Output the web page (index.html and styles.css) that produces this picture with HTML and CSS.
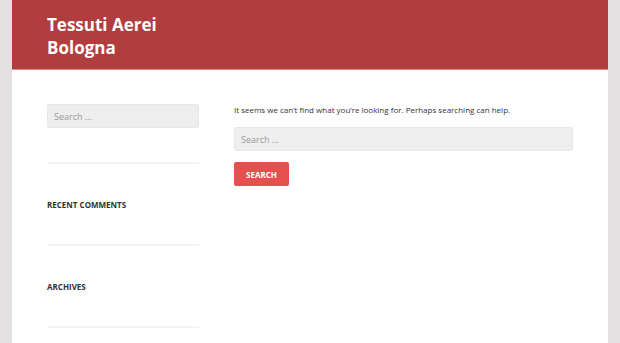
FILE: index.html
```html
<!DOCTYPE html>
<html lang="it">
<head>
    <meta charset="UTF-8">
    <meta name="viewport" content="width=device-width, initial-scale=1.0">
    <title>Tessuti Aerei Bologna</title>
    <link rel="stylesheet" href="styles.css">
</head>
<body>
    <div class="page">
        <header class="site-header">
            <h1 class="site-title">Tessuti Aerei<br>Bologna</h1>
        </header>

        <div class="content">
            <aside class="sidebar">
                <div class="widget widget-search">
                    <input class="search-field" type="search" placeholder="Search …">
                </div>
                <div class="widget">
                    <h2 class="widget-title">Recent Comments</h2>
                </div>
                <div class="widget">
                    <h2 class="widget-title">Archives</h2>
                </div>
            </aside>

            <main class="main">
                <p class="notice">It seems we can’t find what you’re looking for. Perhaps searching can help.</p>
                <form class="search-form">
                    <input class="search-field" type="search" placeholder="Search …">
                    <button class="search-submit" type="button">Search</button>
                </form>
            </main>
        </div>
    </div>
</body>
</html>
```

FILE: styles.css
```css
* {
    margin: 0;
    padding: 0;
    box-sizing: border-box;
}

body {
    background: #e2e0e0;
    font-family: 'Open Sans', 'Noto Sans', sans-serif;
    color: #333;
    height: 100vh;
    overflow: hidden;
}

.page {
    width: 596px;
    margin: 0 12px;
    background: #fff;
    min-height: 100vh;
}

.site-header {
    background: #b23d3e;
    border-bottom: 1px solid #e78585;
    height: 70px;
    padding: 13px 35px 0;
}

.site-title {
    color: #fff;
    font-size: 17px;
    line-height: 23px;
    font-weight: 700;
}

.content {
    display: flex;
    gap: 35px;
    padding: 34px 35px 0;
}

.sidebar {
    width: 152px;
    flex-shrink: 0;
}

.widget {
    border-bottom: 2px solid #f4f4f4;
    height: 82px;
    padding-top: 35px;
}

.widget-search {
    height: 60px;
    padding-top: 0;
}

.widget-title {
    font-size: 8px;
    font-weight: 700;
    text-transform: uppercase;
    color: #333;
    line-height: 11px;
}

.search-field {
    display: block;
    width: 100%;
    height: 24px;
    background: #eee;
    border: 1px solid #e8e8e8;
    border-radius: 2px;
    padding: 0 6px;
    font-family: inherit;
    font-size: 9px;
    color: #555;
    outline: none;
}

.search-field::placeholder {
    color: #9a9a9a;
}

.main {
    flex: 1;
}

.notice {
    font-size: 8px;
    line-height: 12px;
}

.search-form {
    margin-top: 11px;
}

.search-submit {
    display: block;
    margin-top: 11px;
    width: 55px;
    height: 24px;
    background: #e74f4f;
    border: 0;
    border-radius: 2px;
    color: #fff;
    font-family: inherit;
    font-size: 8px;
    font-weight: 700;
    text-transform: uppercase;
}
```
